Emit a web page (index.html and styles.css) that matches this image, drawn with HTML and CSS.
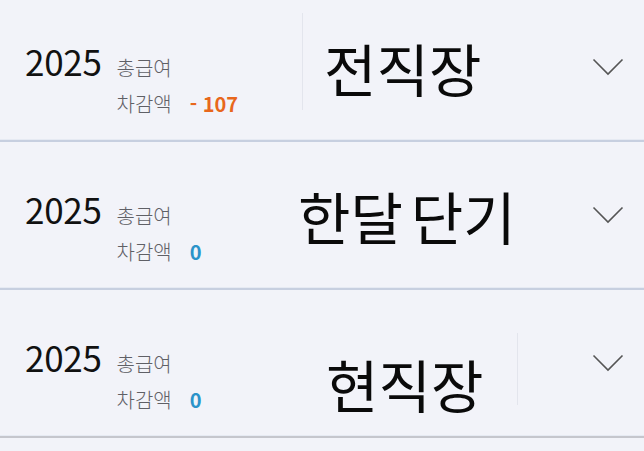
FILE: index.html
```html
<!DOCTYPE html>
<html lang="ko">
<head>
<meta charset="utf-8">
<link rel="stylesheet" href="styles.css">
</head>
<body>
<div class="list">
  <div class="row row-first">
    <div class="summary">
      <span class="year">2025</span>
      <div class="details">
        <span class="label">총급여</span><span class="value"></span>
        <span class="label">차감액</span><span class="value neg">- 107</span>
      </div>
    </div>
    <span class="divider divider-a"></span>
    <span class="title title-a">전직장</span>
    <svg class="chev" width="32" height="18" viewBox="0 0 32 18"><path d="M1.5 1.5 L16 16 L30.5 1.5" fill="none" stroke="#555" stroke-width="1.6"/></svg>
  </div>
  <div class="row">
    <div class="summary">
      <span class="year">2025</span>
      <div class="details">
        <span class="label">총급여</span><span class="value"></span>
        <span class="label">차감액</span><span class="value zero">0</span>
      </div>
    </div>
    <span class="title title-b">한달 단기</span>
    <svg class="chev" width="32" height="18" viewBox="0 0 32 18"><path d="M1.5 1.5 L16 16 L30.5 1.5" fill="none" stroke="#555" stroke-width="1.6"/></svg>
  </div>
  <div class="row row-last">
    <div class="summary">
      <span class="year">2025</span>
      <div class="details">
        <span class="label">총급여</span><span class="value"></span>
        <span class="label">차감액</span><span class="value zero">0</span>
      </div>
    </div>
    <span class="title title-c">현직장</span>
    <span class="divider divider-c"></span>
    <svg class="chev" width="32" height="18" viewBox="0 0 32 18"><path d="M1.5 1.5 L16 16 L30.5 1.5" fill="none" stroke="#555" stroke-width="1.6"/></svg>
  </div>
</div>
</body>
</html>
```
FILE: styles.css
```css
html, body {
  margin: 0;
  padding: 0;
  background: #f2f3f9;
  overflow: hidden;
}
body {
  font-family: "Noto Sans CJK KR", "Noto Sans", sans-serif;
  width: 644px;
  height: 451px;
}
.list {
  margin-top: -6px;
}
.row {
  display: flex;
  align-items: flex-start;
  height: 148px;
  box-sizing: border-box;
  padding-left: 25px;
  padding-right: 20px;
  border-bottom: 2px solid #c7cfe0;
  box-shadow: inset 0 -1px 0 #e6eaf3;
}
.row-last {
  border-bottom: 2px solid #c5c6cd;
}
.summary {
  display: flex;
  align-items: baseline;
  width: 250px;
  padding-top: 49px;
  flex: 0 0 auto;
}
.year {
  font-size: 35px;
  line-height: 36px;
  color: #111;
  letter-spacing: -0.3px;
}
.details {
  display: grid;
  grid-template-columns: auto auto;
  column-gap: 18px;
  margin-left: 15px;
}
.label {
  font-size: 20px;
  line-height: 36px;
  font-weight: 300;
  color: #5f6066;
}
.value {
  font-size: 20px;
  line-height: 36px;
  font-weight: 700;
}
.neg { color: #e8671c; }
.zero { color: #2b93c9; }
.divider {
  width: 1px;
  background: #e3e5ed;
  flex: 0 0 auto;
}
.divider-a {
  height: 97px;
  margin-top: 19px;
  margin-left: 27px;
}
.divider-c {
  height: 72px;
  margin-top: 43px;
  margin-left: 34px;
}
.title {
  font-size: 57px;
  line-height: 57px;
  color: #0a0a0a;
  white-space: nowrap;
}
.title-a {
  margin-left: 21px;
  margin-top: 45px;
}
.title-b {
  margin-left: 23px;
  margin-top: 45px;
  word-spacing: -8px;
}
.title-c {
  margin-left: 51px;
  margin-top: 65px;
}
.chev {
  margin-left: auto;
  align-self: center;
  flex: 0 0 auto;
}
```
